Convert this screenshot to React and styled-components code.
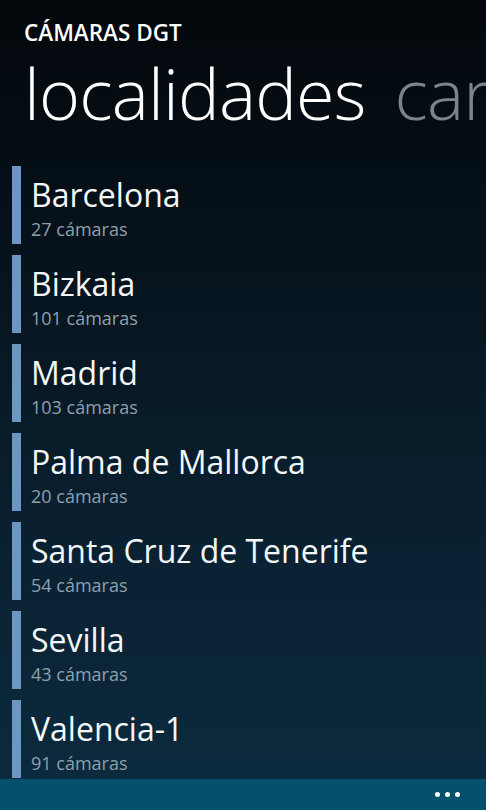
import React from 'react';
import styled, { createGlobalStyle } from 'styled-components';

const localidades = [
    { nombre: 'Barcelona', camaras: 27 },
    { nombre: 'Bizkaia', camaras: 101 },
    { nombre: 'Madrid', camaras: 103 },
    { nombre: 'Palma de Mallorca', camaras: 20 },
    { nombre: 'Santa Cruz de Tenerife', camaras: 54 },
    { nombre: 'Sevilla', camaras: 43 },
    { nombre: 'Valencia-1', camaras: 91 },
];

const App = () => {
    return (
        <>
            <Global />
            <Pantalla>
                <Cabecera>
                    <TituloApp>CÁMARAS DGT</TituloApp>
                    <Pivot>
                        <PivotItem activo>localidades</PivotItem>
                        <PivotItem>carreteras</PivotItem>
                    </Pivot>
                </Cabecera>
                <Lista>
                    {localidades.map((l) => (
                        <Fila key={l.nombre}>
                            <Barra />
                            <Textos>
                                <Nombre>{l.nombre}</Nombre>
                                <Detalle>{l.camaras} cámaras</Detalle>
                            </Textos>
                        </Fila>
                    ))}
                </Lista>
                <AppBar>
                    <Puntos>
                        <Punto />
                        <Punto />
                        <Punto />
                    </Puntos>
                </AppBar>
            </Pantalla>
        </>
    );
}

const Global = createGlobalStyle`
    html, body {
        margin: 0;
        padding: 0;
        background: #03070b;
    }
    * {
        box-sizing: border-box;
    }
`;

const Pantalla = styled.div`
    width: 486px;
    height: 810px;
    display: flex;
    flex-direction: column;
    overflow: hidden;
    font-family: "Open Sans", "Noto Sans", sans-serif;
    color: #ffffff;
    background: linear-gradient(180deg, #03070b 0%, #06121b 30%, #0a2233 70%, #0c2b3f 100%);
`;

const Cabecera = styled.header`
    padding: 21px 0 0 24px;
`;

const TituloApp = styled.h1`
    margin: 0;
    font-size: 22.5px;
    line-height: 24px;
    font-weight: 600;
    letter-spacing: 0;
`;

const Pivot = styled.div`
    display: flex;
    gap: 29px;
    white-space: nowrap;
    overflow: hidden;
`;

const PivotItem = styled.span`
    font-size: 70px;
    line-height: 96px;
    font-weight: 300;
    letter-spacing: -0.8px;
    color: ${(p) => (p.activo ? '#ffffff' : '#7a848b')};
`;

const Lista = styled.ul`
    flex: 1;
    margin: 0;
    padding: 25px 0 0 12px;
    list-style: none;
    display: flex;
    flex-direction: column;
    gap: 11px;
    overflow: hidden;
`;

const Fila = styled.li`
    display: flex;
    height: 78px;
    flex-shrink: 0;
`;

const Barra = styled.div`
    width: 9px;
    background: #6c97c2;
`;

const Textos = styled.div`
    display: flex;
    flex-direction: column;
    padding-left: 10px;
`;

const Nombre = styled.span`
    font-size: 32px;
    line-height: 40px;
    margin-top: 9px;
    letter-spacing: 0;
    color: #f4f7f9;
`;

const Detalle = styled.span`
    font-size: 18px;
    line-height: 22px;
    margin-top: 3px;
    color: #8fa0ab;
`;

const AppBar = styled.footer`
    height: 31px;
    flex-shrink: 0;
    background: #03516c;
    display: flex;
    justify-content: flex-end;
    align-items: center;
    padding-right: 26px;
`;

const Puntos = styled.div`
    display: flex;
    gap: 5px;
`;

const Punto = styled.span`
    width: 5px;
    height: 5px;
    border-radius: 50%;
    background: #ffffff;
`;

export default App;
